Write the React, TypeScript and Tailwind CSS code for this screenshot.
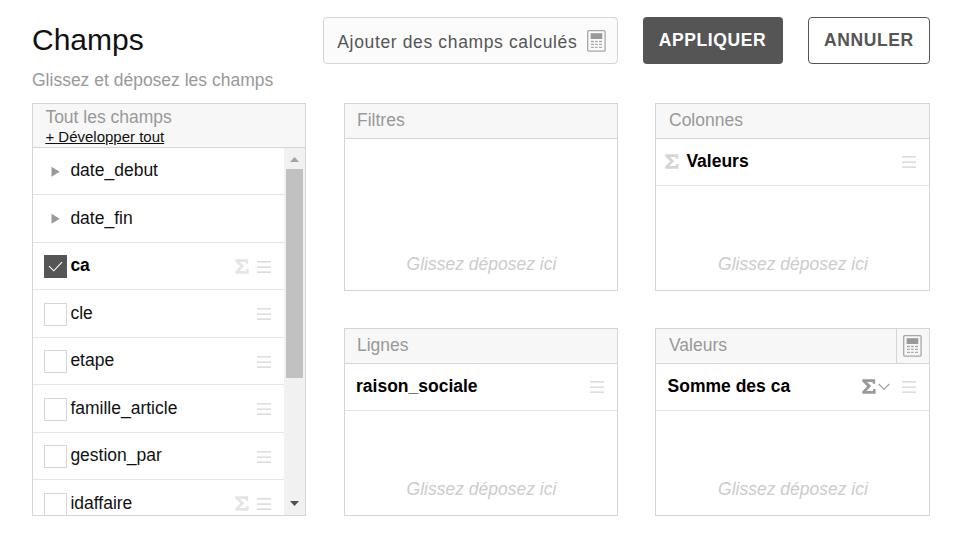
import React from "react";

function Calculator() {
  return (
    <svg width="19" height="22" viewBox="0 0 19 22" fill="none" className="block shrink-0">
      <rect x="0.7" y="0.7" width="17.4" height="20.4" rx="1" stroke="#a6a6a6" strokeWidth="1.3" />
      <rect x="3.6" y="3.2" width="11.7" height="5.8" fill="#999" />
      <path
        d="M4 11.5h3M8.1 11.5h2.6M12 11.5h3M4 14.4h3M8.1 14.4h2.6M12 14.4h3M4 17.3h3M8.1 17.3h2.6M12 17.3h3"
        stroke="#aaa"
        strokeWidth="1.3"
      />
    </svg>
  );
}

function Sigma({ color }: { color: string }) {
  return (
    <svg width="14" height="15" viewBox="0 0 14 15" className="-mt-px block shrink-0">
      <path
        d="M0.3 0.3H13.2V4.8H10.9L10.5 3H5L9.2 7.1L4.4 11.9H10.8L11.3 9.9H13.6V14.7H0.3V12.4L5.2 7.3L0.3 2.6Z"
        fill={color}
      />
    </svg>
  );
}

function Grip({ color = "#d2d2d2" }: { color?: string }) {
  return (
    <svg width="15" height="12" viewBox="0 0 15 12" className="block shrink-0">
      <path d="M0 0.9h14M0 6.1h14M0 11.1h14" stroke={color} strokeWidth="1.2" />
    </svg>
  );
}

type Field = { name: string; kind: "group" | "check"; checked?: boolean; numeric?: boolean };

const fields: Field[] = [
  { name: "date_debut", kind: "group" },
  { name: "date_fin", kind: "group" },
  { name: "ca", kind: "check", checked: true, numeric: true },
  { name: "cle", kind: "check" },
  { name: "etape", kind: "check" },
  { name: "famille_article", kind: "check" },
  { name: "gestion_par", kind: "check" },
  { name: "idaffaire", kind: "check", numeric: true },
];

function FieldRow({ field }: { field: Field }) {
  return (
    <li className="flex h-[47.5px] shrink-0 items-center border-b border-[#e5e5e5] pl-[11px] pr-[12px]">
      {field.kind === "group" ? (
        <svg width="26" height="12" viewBox="0 0 26 12" className="mt-px shrink-0">
          <path d="M7.5 0.7L15.7 5.7L7.5 10.7Z" fill="#999" />
        </svg>
      ) : (
        <span
          className={
            "mr-[3px] mt-[1.5px] flex size-[23px] shrink-0 items-center justify-center border " +
            (field.checked ? "border-[#555] bg-[#555]" : "border-[#d5d5d5] bg-white")
          }
        >
          {field.checked && (
            <svg width="15" height="11" viewBox="0 0 15 11" fill="none">
              <path d="M1 5.2L5.8 9.8L14 1.2" stroke="#fff" strokeWidth="1.1" />
            </svg>
          )}
        </span>
      )}
      <span
        className={
          "-mt-[1.6px] flex-1 pl-[0.4px] leading-[22px] " + (field.checked ? "font-bold text-black" : "text-[#111]")
        }
      >
        {field.name}
      </span>
      <span className="mt-px flex items-center gap-[8px]">
        {field.numeric && <Sigma color="#e5e5e5" />}
        {field.kind === "check" && <Grip />}
      </span>
    </li>
  );
}

type ZoneProps = { title: string; titlePad: string; action?: React.ReactNode; children?: React.ReactNode };

function Zone({ title, titlePad, action, children }: ZoneProps) {
  return (
    <section className="flex h-[188px] flex-col border border-[#d5d5d5]">
      <header className="flex h-[35px] shrink-0 border-b border-[#d5d5d5] bg-[#f7f7f7] text-[#999]">
        <h2 className={"flex-1 pt-[5px] leading-[22px] " + titlePad}>{title}</h2>
        {action}
      </header>
      <div className="flex-1">{children}</div>
      <p className="h-[37px] pl-px text-center italic leading-[22px] text-[#ccc]">Glissez déposez ici</p>
    </section>
  );
}

function ZoneItem({ children }: { children: React.ReactNode }) {
  return (
    <div className="flex h-[47px] items-center border-b border-[#e5e5e5] pr-[12px] font-bold text-black">
      {children}
    </div>
  );
}

export default function App() {
  return (
    <main className="h-[544px] w-[956px] overflow-hidden bg-white pl-[32px] pr-[26px] pt-[17px] font-['Liberation_Sans',Arial,sans-serif] text-[17.5px]">
      <div className="flex h-[86px] justify-between">
        <div>
          <h1 className="mt-[6px] text-[30px] leading-[34px] text-[#111]">Champs</h1>
          <p className="mt-[12px] leading-[22px] text-[#999]">Glissez et déposez les champs</p>
        </div>
        <div className="flex h-[47px] tracking-[0.6px]">
          <button className="mr-[25px] flex w-[295px] items-center rounded-[4px] border border-[#d5d5d5] bg-[#fbfbfb] pl-[13px] text-[#555]">
            <span className="mt-[3px] w-[250px] whitespace-nowrap pl-[0.3px] text-left tracking-[0.64px]">
              Ajouter des champs calculés
            </span>
            <Calculator />
          </button>
          <button className="mr-[25px] w-[140px] rounded-[4px] bg-[#555] pr-px font-bold text-white">APPLIQUER</button>
          <button className="w-[122px] rounded-[4px] border border-[#555] font-bold text-[#555]">ANNULER</button>
        </div>
      </div>

      <div className="flex">
        <section className="flex h-[413px] w-[274px] flex-col border border-[#d5d5d5]">
          <header className="h-[44px] shrink-0 border-b border-[#d5d5d5] bg-[#f7f7f7] pl-[12.4px] pt-[2px]">
            <h2 className="leading-[22px] text-[#999]">Tout les champs</h2>
            <a className="block text-[15px] leading-[17px] text-[#111] underline">+ Développer tout</a>
          </header>
          <div className="flex min-h-0 flex-1 overflow-hidden">
            <ul className="-mt-[0.25px] flex w-[251px] flex-col overflow-hidden">
              {fields.map((f) => (
                <FieldRow key={f.name} field={f} />
              ))}
            </ul>
            <div className="flex flex-1 flex-col items-center bg-[#f1f1f1]">
              <svg width="17" height="21" viewBox="0 0 17 21" className="shrink-0">
                <path d="M4 14L8.5 9L13 14Z" fill="#a3a3a3" />
              </svg>
              <div className="h-[209px] w-[17px] shrink-0 bg-[#c1c1c1]" />
              <svg width="17" height="17" viewBox="0 0 17 17" className="mb-[3px] mt-auto shrink-0">
                <path d="M4 6L13 6L8.5 11Z" fill="#505050" />
              </svg>
            </div>
          </div>
        </section>

        <div className="ml-[38px] flex w-[274px] flex-col gap-[37px]">
          <Zone title="Filtres" titlePad="pl-[12px]" />
          <Zone title="Lignes" titlePad="pl-[12px]">
            <ZoneItem>
              <span className="-mt-px flex-1 pl-[11px]">raison_sociale</span>
              <Grip />
            </ZoneItem>
          </Zone>
        </div>

        <div className="ml-[37px] flex w-[275px] flex-col gap-[37px]">
          <Zone title="Colonnes" titlePad="pl-[13px]">
            <ZoneItem>
              <span className="ml-[9px]">
                <Sigma color="#d5d5d5" />
              </span>
              <span className="-mt-px flex-1 pl-[7.4px]">Valeurs</span>
              <Grip />
            </ZoneItem>
          </Zone>
          <Zone
            title="Valeurs"
            titlePad="pl-[13px]"
            action={
              <div className="flex w-[33px] items-center border-l border-[#d5d5d5] pl-[6px]">
                <Calculator />
              </div>
            }
          >
            <ZoneItem>
              <span className="-mt-px flex-1 pl-[11.6px]">Somme des ca</span>
              <Sigma color="#999" />
              <svg width="12" height="8" viewBox="0 0 12 8" fill="none" className="-mt-px ml-[2px] mr-[12px]">
                <path d="M0.8 1L6 6.3L11.2 1" stroke="#999" strokeWidth="1.1" />
              </svg>
              <Grip />
            </ZoneItem>
          </Zone>
        </div>
      </div>
    </main>
  );
}
